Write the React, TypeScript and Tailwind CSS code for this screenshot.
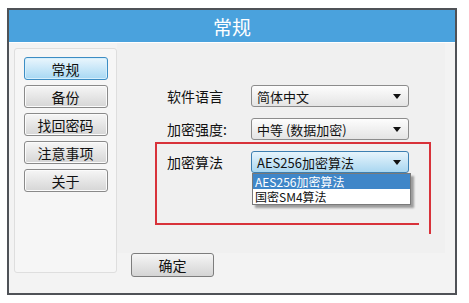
import React from "react";

const font = { fontFamily: '"Noto Sans CJK SC", "Noto Sans", sans-serif' };

function Arrow() {
  return (
    <svg width="8" height="5" viewBox="0 0 8 5" className="shrink-0">
      <path d="M0 0 H8 L4 5 Z" fill="#111" />
    </svg>
  );
}

function SideButton({ label, active }: { label: string; active?: boolean }) {
  return (
    <div
      className={
        "w-[84px] h-[23px] rounded-[3px] border flex items-center justify-center text-[14px] text-[#111] leading-none " +
        (active
          ? "border-[#3c8dc4] bg-gradient-to-b from-[#eaf6fd] to-[#a7d8f3] shadow-[inset_0_0_0_1px_#d6effc]"
          : "border-[#8a8a8a] bg-gradient-to-b from-[#f6f6f6] to-[#d6d6d6] shadow-[inset_0_0_0_1px_#fbfbfb]")
      }
    >
      {label}
    </div>
  );
}

function Select({ value, active }: { value: string; active?: boolean }) {
  return (
    <div
      className={
        "w-[158px] h-[22px] rounded-[3px] border flex items-center justify-between pl-[5px] pr-[7px] text-[13px] text-[#111] leading-none " +
        (active
          ? "border-[#3c7fb1] bg-gradient-to-b from-[#e6f4fc] to-[#a9d6f0]"
          : "border-[#8c8c8c] bg-gradient-to-b from-[#fdfdfd] to-[#e4e4e4]")
      }
    >
      <span>{value}</span>
      <Arrow />
    </div>
  );
}

export default function App() {
  return (
    <div className="w-[469px] h-[303px] bg-white overflow-hidden pt-[8px] pl-[7px]" style={font}>
      <div className="w-[450px] h-[287px] border-[2px] border-[#4f5257] bg-[#f3f3f3] flex flex-col">
        <div className="h-[32px] bg-[#4aa2dd] flex items-center justify-center text-white text-[19px] leading-none shrink-0">
          常规
        </div>
        <div className="h-[1px] bg-white shrink-0" />
        <div className="flex-1 flex relative">
          {/* sidebar */}
          <div className="ml-[5px] mt-[5px] w-[103px] h-[225px] rounded-[3px] border border-[#dedede] bg-[#f6f6f6] flex flex-col items-center gap-[5px] pt-[8px]">
            <SideButton label="常规" active />
            <SideButton label="备份" />
            <SideButton label="找回密码" />
            <SideButton label="注意事项" />
            <SideButton label="关于" />
          </div>
          {/* main */}
          <div className="flex-1 flex flex-col">
            <div className="flex-1 mr-[10px] bg-[#f0f0f0] flex flex-col pl-[50px] pt-[42px] gap-[11px]">
              <div className="flex items-center">
                <span className="w-[84px] text-[14px] text-[#111]">软件语言</span>
                <Select value="简体中文" />
              </div>
              <div className="flex items-center">
                <span className="w-[84px] text-[14px] text-[#111]">加密强度:</span>
                <Select value="中等 (数据加密)" />
              </div>
              <div className="flex items-start relative">
                <span className="w-[84px] text-[14px] text-[#111] mt-[1px]">加密算法</span>
                <div className="relative">
                  <Select value="AES256加密算法" active />
                  <div className="absolute left-[1px] top-[22px] w-[159px] border border-[#7a7a7a] bg-white text-[12px] leading-none shadow-[3px_3px_2px_rgba(0,0,0,0.35)]">
                    <div className="h-[15px] bg-[#3f86c8] text-white flex items-center pl-[2px] overflow-hidden">AES256加密算法</div>
                    <div className="h-[15px] text-[#111] flex items-center pl-[2px] overflow-hidden">国密SM4算法</div>
                  </div>
                </div>
              </div>
            </div>
            <div className="h-[40px] shrink-0 flex items-start pl-[14px]">
              <div className="w-[83px] h-[24px] rounded-[3px] border border-[#7d7d7d] bg-gradient-to-b from-[#f6f6f6] to-[#d4d4d4] flex items-center justify-center text-[14px] text-[#111] leading-none">
                确定
              </div>
            </div>
          </div>
          {/* red annotation */}
          <div className="absolute left-[146px] top-[99px] w-[276px] h-[2px] bg-[#d8323a]" />
          <div className="absolute left-[146px] top-[99px] w-[2px] h-[83px] bg-[#d8323a]" />
          <div className="absolute left-[146px] top-[180px] w-[264px] h-[2px] bg-[#d8323a]" />
          <div className="absolute left-[420px] top-[99px] w-[2px] h-[92px] bg-[#d8323a]" />
        </div>
      </div>
    </div>
  );
}
